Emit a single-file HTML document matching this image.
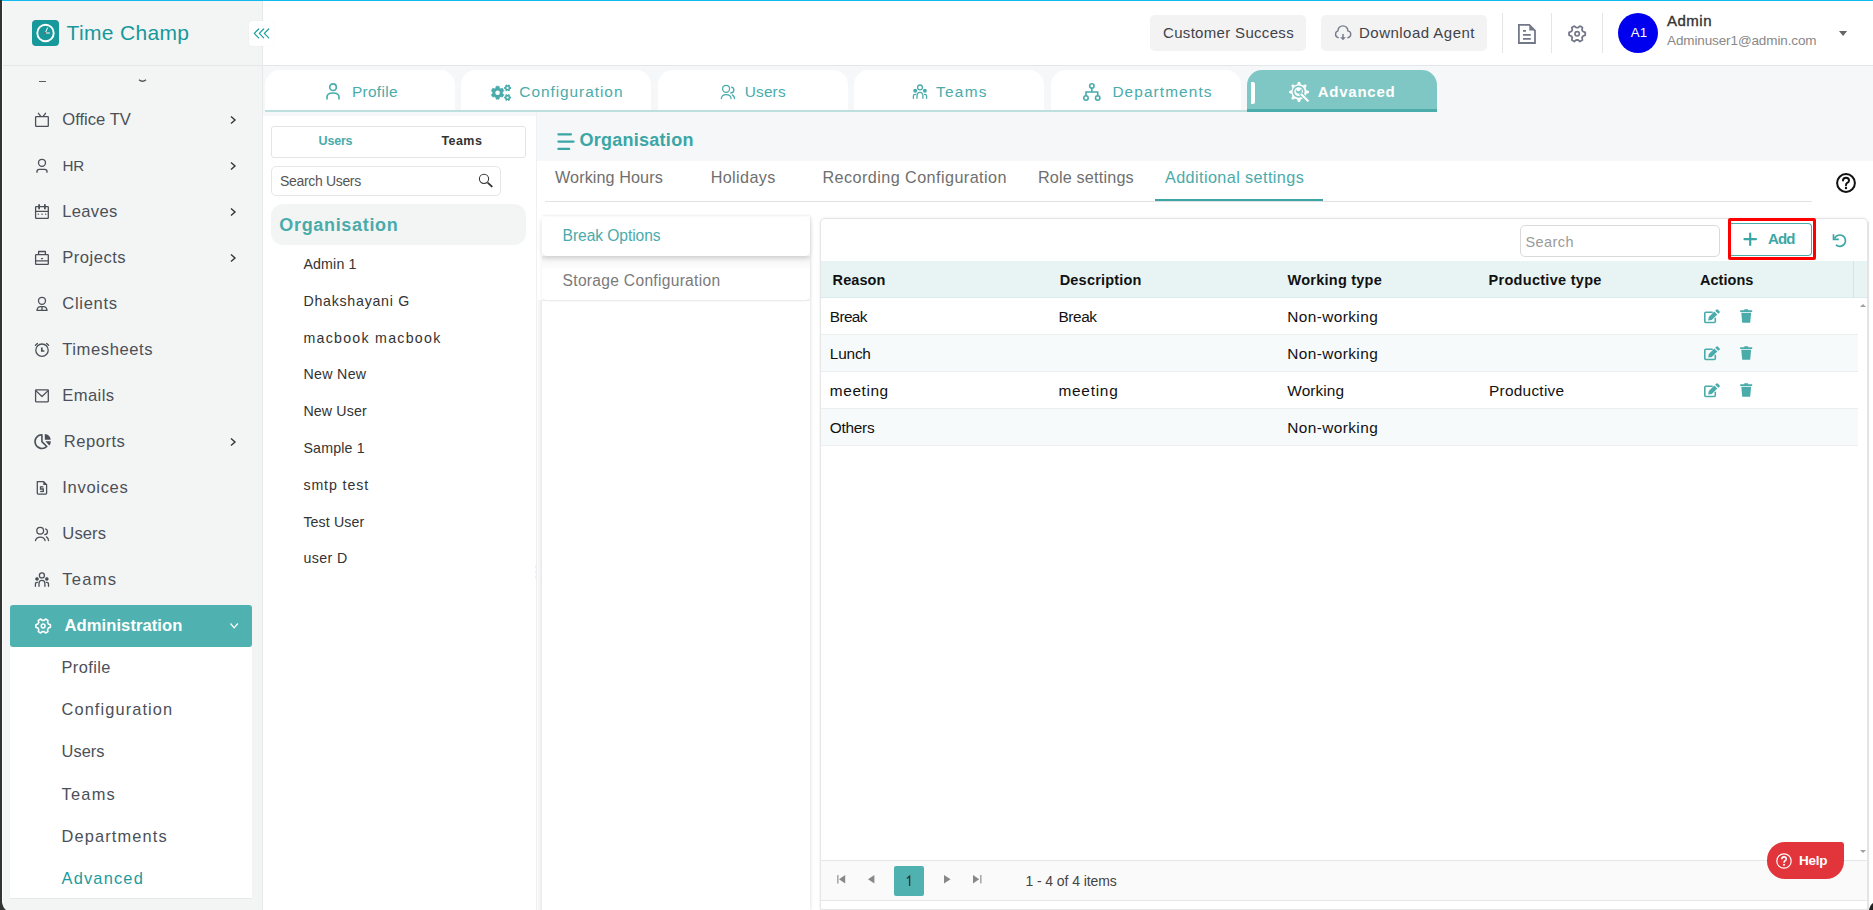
<!DOCTYPE html>
<html><head><meta charset="utf-8">
<style>
*{box-sizing:border-box}
html,body{margin:0;padding:0}
body{width:1873px;height:910px;overflow:hidden;position:relative;background:#f5f7f9;font-family:"Liberation Sans",sans-serif;color:#333}
.a{position:absolute}
.t{position:absolute;white-space:nowrap;line-height:1}
.b{display:inline-block;width:0;height:0;vertical-align:baseline}
svg{position:absolute;overflow:visible}
</style></head><body>
<div class="a" style="left:262px;top:0px;width:1611px;height:65px;background:#fff;"></div>
<div class="a" style="left:0px;top:0px;width:262px;height:65px;background:#f3f5f5;"></div>
<div class="a" style="left:0px;top:65px;width:1873px;height:1px;background:#e4e7e9;"></div>
<div class="a" style="left:0px;top:66px;width:262px;height:844px;background:#f3f5f5;"></div>
<div class="a" style="left:262px;top:0px;width:1px;height:910px;background:#e6e9ea;"></div>
<div class="a" style="left:32px;top:20px;width:27px;height:26px;background:#17989a;border-radius:4px"></div>
<svg style="left:32px;top:20px;" width="27" height="26" viewBox="0 0 27 26"><circle cx="13.5" cy="13" r="8.2" fill="none" stroke="#fff" stroke-width="1.9"/><path d="M13.3 13 L15.6 7.6 M13.3 13 L17.8 13" stroke="#fff" stroke-width="1" fill="none"/><circle cx="13.3" cy="13" r="0.9" fill="#e33"/></svg>
<div class="t" id="t0" style="left:66.5px;top:22.41px;font-size:21px;color:#17989a;letter-spacing:0.333px;">Time Champ<i class="b"></i></div>
<div class="a" style="left:249px;top:21px;width:25px;height:25px;background:#fff;border-radius:4px;box-shadow:0 0 2px rgba(0,0,0,0.06)"></div>
<svg style="left:244px;top:16px;" width="36" height="34" viewBox="0 0 36 34"><path transform="translate(-244,-16)" d="M258.7 29 L254.3 33.4 L258.7 37.8 M263.7 29 L259.3 33.4 L263.7 37.8 M268.7 29 L264.3 33.4 L268.7 37.8" fill="none" stroke="#1c9c9c" stroke-width="1.2" stroke-linecap="round" stroke-linejoin="round"/></svg>
<div class="a" style="left:39px;top:81px;width:7px;height:1.3px;background:#555b62;"></div>
<svg style="left:138px;top:79.3px;" width="9" height="5" viewBox="0 0 9 5"><path d="M1 0.8 Q4.5 3.8 8 0.8" fill="none" stroke="#4b5058" stroke-width="1.4"/></svg>
<svg style="left:30px;top:107px;" width="26" height="24" viewBox="0 0 26 24"><g transform="translate(-30,-107)"><rect x="35.6" y="116.6" width="12.7" height="9.8" rx="0.6" fill="none" stroke="#4b5058" stroke-width="1.3" stroke-linecap="round" stroke-linejoin="round"/><path d="M38.4 113.3 L40.9 116.3 M45.5 113.3 L43.2 116.3" fill="none" stroke="#4b5058" stroke-width="1.3" stroke-linecap="round" stroke-linejoin="round"/></g></svg>
<div class="t" id="t1" style="left:62.3px;top:112.10px;font-size:16.6px;color:#4b5058;">Office TV<i class="b"></i></div>
<svg style="left:230.3px;top:116.1px;" width="6" height="8" viewBox="0 0 6 8"><path d="M1 0.5 L5 4 L1 7.5" fill="none" stroke="#333" stroke-width="1.4"/></svg>
<svg style="left:30px;top:153px;" width="26" height="24" viewBox="0 0 26 24"><g transform="translate(-30,-153)"><circle cx="42" cy="162.8" r="3.5" fill="none" stroke="#4b5058" stroke-width="1.3" stroke-linecap="round" stroke-linejoin="round"/><path d="M37 172.3 V171.6 Q37 169.4 39.2 169.4 H44.8 Q47 169.4 47 171.6 V172.3" fill="none" stroke="#4b5058" stroke-width="1.3" stroke-linecap="round" stroke-linejoin="round"/></g></svg>
<div class="t" id="t2" style="left:62.5px;top:158.10px;font-size:15.2px;color:#4b5058;letter-spacing:-0.3px;">HR<i class="b"></i></div>
<svg style="left:230.3px;top:162.1px;" width="6" height="8" viewBox="0 0 6 8"><path d="M1 0.5 L5 4 L1 7.5" fill="none" stroke="#333" stroke-width="1.4"/></svg>
<svg style="left:30px;top:199px;" width="26" height="24" viewBox="0 0 26 24"><g transform="translate(-30,-199)"><rect x="35.6" y="206.7" width="12.7" height="11.7" rx="0.6" fill="none" stroke="#4b5058" stroke-width="1.3" stroke-linecap="round" stroke-linejoin="round"/><path d="M35.6 211.3 H48.3" fill="none" stroke="#4b5058" stroke-width="1.3" stroke-linecap="round" stroke-linejoin="round"/><path d="M39.1 205 V208.6 M44.9 205 V208.6" fill="none" stroke="#4b5058" stroke-width="1.8" stroke-linecap="round"/><path d="M38.3 214.2 h0.2 M41.9 214.2 h0.3 M45.6 214.2 h0.2" fill="none" stroke="#4b5058" stroke-width="1.3" stroke-linecap="round"/></g></svg>
<div class="t" id="t3" style="left:62.3px;top:204.10px;font-size:16.6px;color:#4b5058;letter-spacing:0.280px;">Leaves<i class="b"></i></div>
<svg style="left:230.3px;top:208.1px;" width="6" height="8" viewBox="0 0 6 8"><path d="M1 0.5 L5 4 L1 7.5" fill="none" stroke="#333" stroke-width="1.4"/></svg>
<svg style="left:30px;top:245px;" width="26" height="24" viewBox="0 0 26 24"><g transform="translate(-30,-245)"><rect x="35.6" y="254.6" width="12.7" height="9.8" rx="0.6" fill="none" stroke="#4b5058" stroke-width="1.3" stroke-linecap="round" stroke-linejoin="round"/><path d="M38.6 254.4 V251.5 H45.4 V254.4 M35.6 260.8 H48.3" fill="none" stroke="#4b5058" stroke-width="1.3" stroke-linecap="round" stroke-linejoin="round"/><path d="M41.4 258.6 H42.6" fill="none" stroke="#4b5058" stroke-width="1.2" stroke-linecap="round"/></g></svg>
<div class="t" id="t4" style="left:62.3px;top:250.10px;font-size:16.6px;color:#4b5058;letter-spacing:0.486px;">Projects<i class="b"></i></div>
<svg style="left:230.3px;top:254.10000000000002px;" width="6" height="8" viewBox="0 0 6 8"><path d="M1 0.5 L5 4 L1 7.5" fill="none" stroke="#333" stroke-width="1.4"/></svg>
<svg style="left:30px;top:291px;" width="26" height="24" viewBox="0 0 26 24"><g transform="translate(-30,-291)"><circle cx="42" cy="300.8" r="3.5" fill="none" stroke="#4b5058" stroke-width="1.3" stroke-linecap="round" stroke-linejoin="round"/><path d="M36.9 310.3 Q37.6 306.6 40.5 306.6 H43.5 Q46.4 306.6 47.1 310.3 Z M42 306.6 V310.3" fill="none" stroke="#4b5058" stroke-width="1.3" stroke-linecap="round" stroke-linejoin="round"/></g></svg>
<div class="t" id="t5" style="left:62.3px;top:296.10px;font-size:16.6px;color:#4b5058;letter-spacing:0.667px;">Clients<i class="b"></i></div>
<svg style="left:30px;top:337px;" width="26" height="24" viewBox="0 0 26 24"><g transform="translate(-30,-337)"><circle cx="42" cy="350.2" r="6.2" fill="none" stroke="#4b5058" stroke-width="1.3" stroke-linecap="round" stroke-linejoin="round"/><path d="M35.4 345.2 L37.4 343.4 M46.6 343.4 L48.6 345.2" fill="none" stroke="#4b5058" stroke-width="1.3" stroke-linecap="round" stroke-linejoin="round"/><path d="M41.8 347.5 V351 H44.4" fill="none" stroke="#4b5058" stroke-width="1.7"/></g></svg>
<div class="t" id="t6" style="left:62.3px;top:342.10px;font-size:16.6px;color:#4b5058;letter-spacing:0.556px;">Timesheets<i class="b"></i></div>
<svg style="left:30px;top:383px;" width="26" height="24" viewBox="0 0 26 24"><g transform="translate(-30,-383)"><rect x="35.6" y="389.9" width="12.7" height="11.9" rx="0.5" fill="none" stroke="#4b5058" stroke-width="1.3" stroke-linecap="round" stroke-linejoin="round"/><path d="M35.8 390.6 L42 396.5 L48.1 390.6" fill="none" stroke="#4b5058" stroke-width="1.3" stroke-linecap="round" stroke-linejoin="round"/></g></svg>
<div class="t" id="t7" style="left:62.3px;top:388.10px;font-size:16.6px;color:#4b5058;letter-spacing:0.400px;">Emails<i class="b"></i></div>
<svg style="left:30px;top:430.0px;" width="26" height="24" viewBox="0 0 26 24"><path d="M41.9 441.6 V434.7 A6.9 6.9 0 1 0 46.8 446.5 Z" fill="none" stroke="#4b5058" stroke-width="1.6" stroke-linejoin="round" transform="translate(-30,-430)"/><path d="M44.8 439.8 V433.9 A5.9 5.9 0 0 1 50.7 439.8 Z M45.4 441.3 H50.8 A6.2 6.2 0 0 1 49.3 445.6 Z" fill="#4b5058" transform="translate(-30,-430)"/></svg>
<div class="t" id="t8" style="left:63.8px;top:434.10px;font-size:16.6px;color:#4b5058;letter-spacing:0.500px;">Reports<i class="b"></i></div>
<svg style="left:230.3px;top:438.1px;" width="6" height="8" viewBox="0 0 6 8"><path d="M1 0.5 L5 4 L1 7.5" fill="none" stroke="#333" stroke-width="1.4"/></svg>
<svg style="left:30px;top:475px;" width="26" height="24" viewBox="0 0 26 24"><g transform="translate(-30,-475)"><path d="M37.3 481.6 H43.6 L46.6 484.8 V493.3 A0.8 0.8 0 0 1 45.8 494.1 H38.1 A0.8 0.8 0 0 1 37.3 493.3 Z" fill="none" stroke="#4b5058" stroke-width="1.3" stroke-linecap="round" stroke-linejoin="round"/><path d="M43.3 481 L47.2 484.9 H43.3 Z" fill="#4b5058"/><path d="M43.4 486.9 H40.5 V489 H43.3 V491.4 H40.2" fill="none" stroke="#4b5058" stroke-width="1.3"/><path d="M41.9 486 V486.9 M41.9 491.4 V492.4" fill="none" stroke="#4b5058" stroke-width="0.9"/></g></svg>
<div class="t" id="t9" style="left:62.3px;top:480.10px;font-size:16.6px;color:#4b5058;letter-spacing:0.657px;">Invoices<i class="b"></i></div>
<svg style="left:30px;top:521px;" width="26" height="24" viewBox="0 0 26 24"><g transform="translate(-30,-521)"><circle cx="40.2" cy="530.8" r="3.4" fill="none" stroke="#4b5058" stroke-width="1.3" stroke-linecap="round" stroke-linejoin="round"/><path d="M45.6 529 A2.9 2.9 0 0 1 44.8 534.6" fill="none" stroke="#4b5058" stroke-width="1.3" stroke-linecap="round" stroke-linejoin="round"/><path d="M35.5 540.5 A4.9 4.3 0 0 1 45.1 540.5 M46.5 536.9 Q48.3 538.2 48.5 540.5" fill="none" stroke="#4b5058" stroke-width="1.3" stroke-linecap="round" stroke-linejoin="round"/></g></svg>
<div class="t" id="t10" style="left:62.3px;top:526.10px;font-size:16.6px;color:#4b5058;letter-spacing:0.100px;">Users<i class="b"></i></div>
<svg style="left:30px;top:567px;" width="26" height="24" viewBox="0 0 26 24"><g transform="translate(-30,-567)"><circle cx="41.9" cy="575.4" r="2.5" fill="none" stroke="#4b5058" stroke-width="1.3" stroke-linecap="round" stroke-linejoin="round"/><circle cx="37" cy="578.9" r="1.5" fill="#4b5058" stroke="#4b5058" stroke-width="0.6"/><circle cx="46.8" cy="578.9" r="1.5" fill="#4b5058" stroke="#4b5058" stroke-width="0.6"/><path d="M39 586.3 V583.4 A2.95 2.95 0 0 1 44.9 583.4 V586.3 M35.4 586.3 V584 Q35.4 582.3 37.4 582.3 M48.5 586.3 V584 Q48.5 582.3 46.5 582.3" fill="none" stroke="#4b5058" stroke-width="1.3" stroke-linecap="round" stroke-linejoin="round"/></g></svg>
<div class="t" id="t11" style="left:62.3px;top:572.10px;font-size:16.6px;color:#4b5058;letter-spacing:1.200px;">Teams<i class="b"></i></div>
<div class="a" style="left:10px;top:605px;width:242px;height:42px;background:#4fb2b0;border-radius:3px"></div>
<svg style="left:34.7px;top:618px;" width="16.3" height="16" viewBox="0 0 16.3 16"><path d="M13.36 5.94 L15.43 6.69 L15.43 9.31 L13.36 10.06 A5.6 5.6 0 0 1 12.54 11.48 L12.93 13.65 L10.66 14.96 L8.97 13.54 A5.6 5.6 0 0 1 7.33 13.54 L5.64 14.96 L3.37 13.65 L3.76 11.48 A5.6 5.6 0 0 1 2.94 10.06 L0.87 9.31 L0.87 6.69 L2.94 5.94 A5.6 5.6 0 0 1 3.76 4.52 L3.37 2.35 L5.64 1.04 L7.33 2.46 A5.6 5.6 0 0 1 8.97 2.46 L10.66 1.04 L12.93 2.35 L12.54 4.52 A5.6 5.6 0 0 1 13.36 5.94 Z" fill="none" stroke="#fff" stroke-width="1.6" stroke-linejoin="round"/><circle cx="8.15" cy="8" r="1.9" fill="none" stroke="#fff" stroke-width="1.5"/></svg>
<div class="t" id="t12" style="left:64.6px;top:618.41px;font-size:16.6px;color:#fff;font-weight:700;letter-spacing:0.046px;">Administration<i class="b"></i></div>
<svg style="left:230px;top:623px;" width="8.3" height="5.5" viewBox="0 0 8.3 5.5"><path d="M0.5 0.5 L4.15 4.8 L7.8 0.5" fill="none" stroke="#fff" stroke-width="1.2"/></svg>
<div class="a" style="left:10px;top:647px;width:242px;height:251px;background:#fff;"></div>
<div class="a" style="left:10px;top:898px;width:242px;height:1px;background:#e6e9ea;"></div>
<div class="t" id="t13" style="left:61.5px;top:659.31px;font-size:16.4px;color:#4b5058;letter-spacing:0.400px;">Profile<i class="b"></i></div>
<div class="t" id="t14" style="left:61.5px;top:701.37px;font-size:16.4px;color:#4b5058;letter-spacing:1.100px;">Configuration<i class="b"></i></div>
<div class="t" id="t15" style="left:61.5px;top:743.43px;font-size:16.4px;color:#4b5058;letter-spacing:0.050px;">Users<i class="b"></i></div>
<div class="t" id="t16" style="left:61.5px;top:785.50px;font-size:16.4px;color:#4b5058;letter-spacing:1.250px;">Teams<i class="b"></i></div>
<div class="t" id="t17" style="left:61.5px;top:827.55px;font-size:16.4px;color:#4b5058;letter-spacing:1.140px;">Departments<i class="b"></i></div>
<div class="t" id="t18" style="left:61.5px;top:869.60px;font-size:16.4px;color:#1b9b9c;letter-spacing:1.200px;">Advanced<i class="b"></i></div>
<div class="a" style="left:0px;top:0px;width:1873px;height:1px;background:#10b9ee;z-index:50"></div>
<div class="a" style="left:0px;top:0px;width:2px;height:910px;background:#333;z-index:50"></div>
<div class="a" style="left:2px;top:1px;width:1px;height:909px;background:#fff;z-index:50"></div>
<svg style="left:0px;top:902px;z-index:51" width="6" height="8" viewBox="0 0 6 8"><path d="M0 0 H2 Q2.5 5 6 8 H0 Z" fill="#333"/></svg>
<svg style="left:1867px;top:903px;z-index:51" width="6" height="7" viewBox="0 0 6 7"><path d="M6 0 V7 H2 Q3 2 6 0 Z" fill="#222"/></svg>
<div class="a" style="left:1150px;top:15px;width:156px;height:36px;background:#f3f3f4;border-radius:5px"></div>
<div class="t" id="t19" style="left:1163px;top:24.91px;font-size:15px;color:#3f4349;letter-spacing:0.320px;">Customer Success<i class="b"></i></div>
<div class="a" style="left:1321px;top:15px;width:166px;height:36px;background:#f3f3f4;border-radius:5px"></div>
<svg style="left:1320px;top:15px;" width="40" height="35" viewBox="0 0 40 35"><g transform="translate(-1320,-15)"><path d="M1338.2 37.6 A3.5 3.5 0 0 1 1337.9 30.9 A5 5 0 0 1 1347.9 30.9 A3.45 3.45 0 0 1 1347.9 37.7" fill="none" stroke="#777c8e" stroke-width="1.4" stroke-linecap="round"/><path d="M1343 34 V38.3" stroke="#777c8e" stroke-width="1.5"/><path d="M1340.1 37.2 L1343 40.3 L1345.9 37.2 Z" fill="#777c8e"/></g></svg>
<div class="t" id="t20" style="left:1359px;top:24.91px;font-size:15px;color:#3f4349;letter-spacing:0.477px;">Download Agent<i class="b"></i></div>
<div class="a" style="left:1502px;top:13px;width:1px;height:40px;background:#e3e5e8;"></div>
<div class="a" style="left:1551px;top:13px;width:1px;height:40px;background:#e3e5e8;"></div>
<div class="a" style="left:1602px;top:13px;width:1px;height:40px;background:#e3e5e8;"></div>
<svg style="left:1518px;top:24px;" width="18" height="20" viewBox="0 0 18 20"><path d="M0.9 0.9 H11.3 L17 6.6 V19 H0.9 Z" fill="none" stroke="#737889" stroke-width="1.8"/><path d="M11.3 0.9 L17 6.6 H11.3 Z" fill="#737889"/><path d="M5 6.8 H8 M5 10.8 H12.8 M5 14.8 H12.8" stroke="#737889" stroke-width="1.7"/></svg>
<svg style="left:1567.7px;top:25px;" width="18.3" height="17.6" viewBox="0 0 18.3 17.6"><path d="M14.91 6.52 L17.22 7.35 L17.22 10.25 L14.91 11.08 A6.2 6.2 0 0 1 14.01 12.65 L14.44 15.06 L11.93 16.52 L10.06 14.93 A6.2 6.2 0 0 1 8.24 14.93 L6.37 16.52 L3.86 15.06 L4.29 12.65 A6.2 6.2 0 0 1 3.39 11.08 L1.08 10.25 L1.08 7.35 L3.39 6.52 A6.2 6.2 0 0 1 4.29 4.95 L3.86 2.54 L6.37 1.08 L8.24 2.67 A6.2 6.2 0 0 1 10.06 2.67 L11.93 1.08 L14.44 2.54 L14.01 4.95 A6.2 6.2 0 0 1 14.91 6.52 Z" fill="none" stroke="#737889" stroke-width="1.8" stroke-linejoin="round"/><circle cx="9.15" cy="8.8" r="2.2" fill="none" stroke="#737889" stroke-width="1.7"/></svg>
<div class="a" style="left:1618px;top:13px;width:40px;height:40px;background:#0000ee;border-radius:50%"></div>
<div class="t" id="t21" style="left:1630.8px;top:26.32px;font-size:13.3px;color:#fff;">A1<i class="b"></i></div>
<div class="t" id="t22" style="left:1667px;top:13.00px;font-size:15px;color:#333;letter-spacing:0.500px;-webkit-text-stroke:0.35px #333;">Admin<i class="b"></i></div>
<div class="t" id="t23" style="left:1667px;top:34.41px;font-size:13.5px;color:#888;letter-spacing:-0.116px;">Adminuser1@admin.com<i class="b"></i></div>
<svg style="left:1838.7px;top:30.7px;" width="8.1" height="5" viewBox="0 0 8.1 5"><path d="M0 0 H8.1 L4.05 5 Z" fill="#666"/></svg>
<div class="a" style="left:265px;top:109.5px;width:1172px;height:2.5px;background:#bde0df;"></div>
<div class="a" style="left:265px;top:70px;width:190px;height:39.5px;background:#fff;border-radius:15px 15px 0 0"></div>
<div class="t" id="t24" style="left:351.9px;top:84.21px;font-size:15.4px;color:#4aabab;letter-spacing:0.333px;">Profile<i class="b"></i></div>
<div class="a" style="left:461px;top:70px;width:190px;height:39.5px;background:#fff;border-radius:15px 15px 0 0"></div>
<div class="t" id="t25" style="left:519.3px;top:84.21px;font-size:15.4px;color:#4aabab;letter-spacing:0.967px;">Configuration<i class="b"></i></div>
<div class="a" style="left:658px;top:70px;width:190px;height:39.5px;background:#fff;border-radius:15px 15px 0 0"></div>
<div class="t" id="t26" style="left:744.8px;top:84.21px;font-size:15.4px;color:#4aabab;letter-spacing:0.150px;">Users<i class="b"></i></div>
<div class="a" style="left:854px;top:70px;width:190px;height:39.5px;background:#fff;border-radius:15px 15px 0 0"></div>
<div class="t" id="t27" style="left:936.1px;top:84.21px;font-size:15.4px;color:#4aabab;letter-spacing:1.250px;">Teams<i class="b"></i></div>
<div class="a" style="left:1051px;top:70px;width:190px;height:39.5px;background:#fff;border-radius:15px 15px 0 0"></div>
<div class="t" id="t28" style="left:1112.4px;top:84.21px;font-size:15.4px;color:#4aabab;letter-spacing:1.100px;">Departments<i class="b"></i></div>
<div class="a" style="left:1247px;top:70px;width:190px;height:42px;background:#7fc7c4;border-radius:15px 15px 0 0"></div>
<div class="a" style="left:1247px;top:109px;width:190px;height:3px;background:#4aadab;"></div>
<div class="a" style="left:1250.7px;top:82px;width:4.3px;height:22px;background:#fff;border-radius:0 2px 2px 0"></div>
<div class="t" id="t29" style="left:1317.8px;top:84.21px;font-size:15px;color:#fff;font-weight:700;letter-spacing:0.743px;">Advanced<i class="b"></i></div>
<svg style="left:326px;top:83px;" width="14" height="17" viewBox="0 0 14 17"><circle cx="7" cy="4.2" r="3.3" fill="none" stroke="#4aabab" stroke-width="1.6" stroke-linecap="round"/><path d="M1 16 V14 Q1 10 7 10 Q13 10 13 14 V16" fill="none" stroke="#4aabab" stroke-width="1.6" stroke-linecap="round"/></svg>
<svg style="left:487px;top:80px;" width="28" height="24" viewBox="0 0 28 24"><path d="M8.61 8.22 L9.23 6.24 L11.97 6.24 L12.59 8.22 A4.9 4.9 0 0 1 13.48 8.74 L15.50 8.28 L16.88 10.66 L15.47 12.19 A4.9 4.9 0 0 1 15.47 13.21 L16.88 14.74 L15.50 17.12 L13.48 16.66 A4.9 4.9 0 0 1 12.59 17.18 L11.97 19.16 L9.23 19.16 L8.61 17.18 A4.9 4.9 0 0 1 7.72 16.66 L5.70 17.12 L4.32 14.74 L5.73 13.21 A4.9 4.9 0 0 1 5.73 12.19 L4.32 10.66 L5.70 8.28 L7.72 8.74 A4.9 4.9 0 0 1 8.61 8.22 Z" fill="#4aabab" stroke="#4aabab" stroke-width="0.6" stroke-linejoin="round"/><circle cx="10.6" cy="12.7" r="2.3" fill="#fff"/><path d="M22.98 6.84 L24.10 7.08 L24.10 8.72 L22.98 8.96 A2.6 2.6 0 0 1 22.70 9.43 L23.06 10.52 L21.64 11.35 L20.87 10.49 A2.6 2.6 0 0 1 20.33 10.49 L19.56 11.35 L18.14 10.52 L18.50 9.43 A2.6 2.6 0 0 1 18.22 8.96 L17.10 8.72 L17.10 7.08 L18.22 6.84 A2.6 2.6 0 0 1 18.50 6.37 L18.14 5.28 L19.56 4.45 L20.33 5.31 A2.6 2.6 0 0 1 20.87 5.31 L21.64 4.45 L23.06 5.28 L22.70 6.37 A2.6 2.6 0 0 1 22.98 6.84 Z" fill="#4aabab"/><circle cx="20.6" cy="7.9" r="1.1" fill="#fff"/><path d="M22.98 16.44 L24.10 16.68 L24.10 18.32 L22.98 18.56 A2.6 2.6 0 0 1 22.70 19.03 L23.06 20.12 L21.64 20.95 L20.87 20.09 A2.6 2.6 0 0 1 20.33 20.09 L19.56 20.95 L18.14 20.12 L18.50 19.03 A2.6 2.6 0 0 1 18.22 18.56 L17.10 18.32 L17.10 16.68 L18.22 16.44 A2.6 2.6 0 0 1 18.50 15.97 L18.14 14.88 L19.56 14.05 L20.33 14.91 A2.6 2.6 0 0 1 20.87 14.91 L21.64 14.05 L23.06 14.88 L22.70 15.97 A2.6 2.6 0 0 1 22.98 16.44 Z" fill="#4aabab"/><circle cx="20.6" cy="17.5" r="1.1" fill="#fff"/></svg>
<svg style="left:715px;top:80px;" width="25" height="24" viewBox="0 0 25 24"><g transform="translate(-715,-80)" fill="none" stroke="#4aabab" stroke-width="1.3" stroke-linecap="round"><circle cx="726.1" cy="88.8" r="3.5"/><path d="M731.6 87.1 A3 3 0 0 1 730.8 93"/><path d="M721.3 98.5 A4.95 4.5 0 0 1 731.1 98.5 M732.4 94.9 Q734.4 96.3 734.6 98.5"/></g></svg>
<svg style="left:905px;top:80px;" width="30" height="24" viewBox="0 0 30 24"><g transform="translate(-905,-80)" fill="none" stroke="#4aabab" stroke-width="1.3" stroke-linecap="round"><circle cx="920" cy="87.4" r="2.4"/><circle cx="915.2" cy="90.8" r="1.3" fill="#4aabab"/><circle cx="924.9" cy="90.8" r="1.3" fill="#4aabab"/><path d="M917 98.3 V95.3 A2.95 2.95 0 0 1 922.9 95.3 V98.3 M913.4 98.3 V95.9 Q913.4 94.4 915.4 94.4 M926.6 98.3 V95.9 Q926.6 94.4 924.6 94.4"/></g></svg>
<svg style="left:1082.7px;top:83.3px;" width="17.7" height="18.1" viewBox="0 0 17.7 18.1"><circle cx="8.85" cy="3" r="2.2" fill="none" stroke="#4aabab" stroke-width="1.6" stroke-linecap="round"/><circle cx="3" cy="15" r="2.2" fill="none" stroke="#4aabab" stroke-width="1.6" stroke-linecap="round"/><circle cx="14.7" cy="15" r="2.2" fill="none" stroke="#4aabab" stroke-width="1.6" stroke-linecap="round"/><path d="M8.85 5.2 V9 M3 12.8 V9 H14.7 V12.8" fill="none" stroke="#4aabab" stroke-width="1.6" stroke-linecap="round"/></svg>
<svg style="left:1284px;top:78px;" width="30" height="28" viewBox="0 0 30 28"><path d="M13.23 6.61 L13.90 4.06 L16.10 4.06 L16.77 6.61 A7.6 7.6 0 0 1 18.97 7.52 L21.25 6.20 L22.80 7.75 L21.48 10.03 A7.6 7.6 0 0 1 22.39 12.23 L24.94 12.90 L24.94 15.10 L22.39 15.77 A7.6 7.6 0 0 1 21.48 17.97 L22.80 20.25 L21.25 21.80 L18.97 20.48 A7.6 7.6 0 0 1 16.77 21.39 L16.10 23.94 L13.90 23.94 L13.23 21.39 A7.6 7.6 0 0 1 11.03 20.48 L8.75 21.80 L7.20 20.25 L8.52 17.97 A7.6 7.6 0 0 1 7.61 15.77 L5.06 15.10 L5.06 12.90 L7.61 12.23 A7.6 7.6 0 0 1 8.52 10.03 L7.20 7.75 L8.75 6.20 L11.03 7.52 A7.6 7.6 0 0 1 13.23 6.61 Z" fill="#fff"/><circle cx="14.6" cy="13.6" r="5.2" fill="#fff" stroke="#7fc7c4" stroke-width="1.7"/><path d="M17.5 16.5 L23.8 22.8" stroke="#7fc7c4" stroke-width="4.2" stroke-linecap="round"/><path d="M17.5 16.5 L23.8 22.8" stroke="#fff" stroke-width="2.2" stroke-linecap="round"/><path d="M12.2 11.2 A3 3 0 1 0 16.8 10.4 A2.2 2.2 0 1 1 12.2 11.2 Z" fill="#7fc7c4"/></svg>
<div class="a" style="left:263px;top:116px;width:273px;height:794px;background:#fff;"></div>
<div class="a" style="left:535.8px;top:112px;width:1.5px;height:798px;background:#edf1f3;"></div>
<div class="a" style="left:271px;top:126px;width:255px;height:32px;background:#fff;border:1px solid #e4e4e4;border-radius:3px"></div>
<div class="t" id="t30" style="left:318.6px;top:135.31px;font-size:12.5px;color:#4aabab;font-weight:700;letter-spacing:-0.200px;">Users<i class="b"></i></div>
<div class="t" id="t31" style="left:441.4px;top:135.31px;font-size:12.5px;color:#333;font-weight:700;letter-spacing:0.450px;">Teams<i class="b"></i></div>
<div class="a" style="left:271px;top:166px;width:230px;height:30px;background:#fff;border:1px solid #e6e6e6;border-radius:5px"></div>
<div class="t" id="t32" style="left:280px;top:173.82px;font-size:14px;color:#555;letter-spacing:-0.327px;">Search Users<i class="b"></i></div>
<svg style="left:470px;top:165px;" width="35" height="35" viewBox="0 0 35 35"><g transform="translate(-470,-165)"><circle cx="484" cy="178.8" r="4.6" fill="none" stroke="#333" stroke-width="1.05"/><path d="M487.6 182.6 L492.3 186.9" stroke="#333" stroke-width="1.9" stroke-linecap="butt"/></g></svg>
<div class="a" style="left:271px;top:204px;width:255px;height:41px;background:#f3f5f5;border-radius:12px"></div>
<div class="t" id="t33" style="left:279.3px;top:215.51px;font-size:18px;color:#4aabab;font-weight:700;letter-spacing:0.673px;">Organisation<i class="b"></i></div>
<div class="t" id="t34" style="left:303.4px;top:256.90px;font-size:14.2px;color:#333;letter-spacing:0.167px;">Admin 1<i class="b"></i></div>
<div class="t" id="t35" style="left:303.4px;top:293.70px;font-size:14.2px;color:#333;letter-spacing:0.750px;">Dhakshayani G<i class="b"></i></div>
<div class="t" id="t36" style="left:303.4px;top:330.51px;font-size:14.2px;color:#333;letter-spacing:1.271px;">macbook macbook<i class="b"></i></div>
<div class="t" id="t37" style="left:303.4px;top:367.32px;font-size:14.2px;color:#333;letter-spacing:0.333px;">New New<i class="b"></i></div>
<div class="t" id="t38" style="left:303.4px;top:404.11px;font-size:14.2px;color:#333;letter-spacing:0.143px;">New User<i class="b"></i></div>
<div class="t" id="t39" style="left:303.4px;top:440.90px;font-size:14.2px;color:#333;letter-spacing:0.200px;">Sample 1<i class="b"></i></div>
<div class="t" id="t40" style="left:303.4px;top:477.70px;font-size:14.2px;color:#333;letter-spacing:0.900px;">smtp test<i class="b"></i></div>
<div class="t" id="t41" style="left:303.4px;top:514.51px;font-size:14.2px;color:#333;letter-spacing:0.125px;">Test User<i class="b"></i></div>
<div class="t" id="t42" style="left:303.4px;top:551.32px;font-size:14.2px;color:#333;letter-spacing:0.400px;">user D<i class="b"></i></div>
<div class="a" style="left:534.5px;top:565px;width:4.2px;height:4.2px;background:#e9eef2;border-radius:50%"></div>
<div class="a" style="left:534.5px;top:570px;width:4.2px;height:4.2px;background:#e9eef2;border-radius:50%"></div>
<div class="a" style="left:534.5px;top:575px;width:4.2px;height:4.2px;background:#e9eef2;border-radius:50%"></div>
<div class="a" style="left:537px;top:112px;width:1336px;height:49px;background:#f6f7f9;"></div>
<div class="a" style="left:537px;top:161px;width:1336px;height:749px;background:#fff;"></div>
<svg style="left:556.5px;top:132.5px;" width="18" height="18" viewBox="0 0 18 18"><path d="M1.4 1.3 H14 M1.4 8.6 H16.6 M1.4 15.9 H12.2" stroke="#3aa6a5" stroke-width="2.2" stroke-linecap="round"/></svg>
<div class="t" id="t43" style="left:579.4px;top:131.41px;font-size:18px;color:#3aa6a5;font-weight:700;letter-spacing:0.273px;">Organisation<i class="b"></i></div>
<div class="t" id="t44" style="left:555px;top:169.31px;font-size:16.2px;color:#6f6f6f;letter-spacing:0.083px;">Working Hours<i class="b"></i></div>
<div class="t" id="t45" style="left:710.7px;top:169.31px;font-size:16.2px;color:#6f6f6f;letter-spacing:0.371px;">Holidays<i class="b"></i></div>
<div class="t" id="t46" style="left:822.5px;top:169.31px;font-size:16.2px;color:#6f6f6f;letter-spacing:0.427px;">Recording Configuration<i class="b"></i></div>
<div class="t" id="t47" style="left:1037.9px;top:169.31px;font-size:16.2px;color:#6f6f6f;letter-spacing:0.183px;">Role settings<i class="b"></i></div>
<div class="t" id="t48" style="left:1165px;top:169.31px;font-size:16.2px;color:#4aabab;letter-spacing:0.411px;">Additional settings<i class="b"></i></div>
<div class="a" style="left:545px;top:201px;width:1267px;height:1px;background:#e2e2e2;"></div>
<div class="a" style="left:1155px;top:199px;width:168px;height:2.4px;background:#3aa6a5;"></div>
<svg style="left:1836px;top:173px;" width="20" height="20" viewBox="0 0 20 20"><circle cx="10" cy="10" r="8.9" fill="none" stroke="#111" stroke-width="2"/><path d="M7 7.6 Q7 4.8 10 4.8 Q13 4.8 13 7.4 Q13 9 11.2 9.9 Q10 10.5 10 12.2" fill="none" stroke="#111" stroke-width="2" stroke-linecap="round"/><circle cx="10" cy="15" r="1.2" fill="#111"/></svg>
<div class="a" style="left:541.2px;top:216px;width:269px;height:694px;background:#fff;box-shadow:1px 0 3px rgba(0,0,0,0.10)"></div>
<div class="a" style="left:542px;top:255.5px;width:268px;height:44px;background:linear-gradient(180deg,#eaeaea,#f8f8f8 14%,#fff 32%);border-radius:0 0 5px 5px;box-shadow:0 1px 2px rgba(0,0,0,0.10)"></div>
<div class="a" style="left:542px;top:216.6px;width:268px;height:39px;background:#fff;border-radius:5px;box-shadow:0 2px 5px rgba(0,0,0,0.12)"></div>
<div class="a" style="left:537.3px;top:300px;width:4.9px;height:610px;background:linear-gradient(90deg,#fcfcfc,#f3f3f3 60%,#e8e8e8);"></div>
<div class="t" id="t49" style="left:562.6px;top:228.21px;font-size:15.6px;color:#4aabab;letter-spacing:-0.067px;">Break Options<i class="b"></i></div>
<div class="t" id="t50" style="left:562.6px;top:272.61px;font-size:15.6px;color:#7a7a7a;letter-spacing:0.290px;">Storage Configuration<i class="b"></i></div>
<div class="a" style="left:542px;top:299.5px;width:268px;height:1px;background:#ececec;"></div>
<div class="a" style="left:820px;top:217.5px;width:1048px;height:692.5px;background:#fff;border:1px solid #e6e6e6;border-radius:5px 5px 0 0;box-shadow:0 0 3px rgba(0,0,0,0.08)"></div>
<div class="a" style="left:1520px;top:225.3px;width:200px;height:31.5px;background:#fff;border:1px solid #d9d9d9;border-radius:5px"></div>
<div class="t" id="t51" style="left:1525.5px;top:235.00px;font-size:14.5px;color:#9a9a9a;letter-spacing:0.400px;">Search<i class="b"></i></div>
<div class="a" style="left:1729px;top:223px;width:83px;height:33px;background:#fff;border:1.3px solid #4aabab;border-left:none;border-radius:0 4px 4px 0"></div>
<svg style="left:1744px;top:233px;" width="12.4" height="12.4" viewBox="0 0 12.4 12.4"><path d="M6.2 0.5 V11.9 M0.5 6.2 H11.9" stroke="#3aa6a5" stroke-width="2.2" stroke-linecap="round"/></svg>
<div class="t" id="t52" style="left:1768px;top:231.00px;font-size:15px;color:#3aa6a5;font-weight:700;letter-spacing:-0.900px;">Add<i class="b"></i></div>
<div class="a" style="left:1728px;top:218.3px;width:88px;height:41.5px;background:transparent;border:3px solid #ff0000;border-radius:2px"></div>
<svg style="left:1825px;top:225px;" width="35" height="30" viewBox="0 0 35 30"><g transform="translate(-1825,-225)" fill="none" stroke="#3aa6a5" stroke-width="1.7" stroke-linecap="butt" stroke-linejoin="miter"><path d="M1833.5 234.3 V239.3 H1838.8"/><path d="M1834.6 238.3 A5.7 5.7 0 1 1 1835.9 244.9"/></g></svg>
<div class="a" style="left:821px;top:260.8px;width:1046px;height:37px;background:#e8f4f4;border-bottom:1px solid #dcebeb"></div>
<div class="a" style="left:1853px;top:261px;width:1px;height:37px;background:#d7e3e3;"></div>
<div class="t" id="t53" style="left:832.6px;top:273.40px;font-size:14.5px;color:#111;font-weight:700;letter-spacing:0.080px;">Reason<i class="b"></i></div>
<div class="t" id="t54" style="left:1059.7px;top:273.40px;font-size:14.5px;color:#111;font-weight:700;letter-spacing:0.200px;">Description<i class="b"></i></div>
<div class="t" id="t55" style="left:1287.6px;top:273.40px;font-size:14.5px;color:#111;font-weight:700;letter-spacing:0.236px;">Working type<i class="b"></i></div>
<div class="t" id="t56" style="left:1488.6px;top:273.40px;font-size:14.5px;color:#111;font-weight:700;letter-spacing:0.286px;">Productive type<i class="b"></i></div>
<div class="t" id="t57" style="left:1700px;top:273.40px;font-size:14.5px;color:#111;font-weight:700;letter-spacing:0.033px;">Actions<i class="b"></i></div>
<div class="a" style="left:821px;top:334.0px;width:1037px;height:1px;background:#eceff0;"></div>
<div class="t" id="t58" style="left:829.8px;top:309.01px;font-size:15.4px;color:#111;letter-spacing:-0.650px;">Break<i class="b"></i></div>
<div class="t" id="t59" style="left:1058.4px;top:309.01px;font-size:15.4px;color:#111;letter-spacing:-0.400px;">Break<i class="b"></i></div>
<div class="t" id="t60" style="left:1287.3px;top:309.01px;font-size:15.4px;color:#111;letter-spacing:0.400px;">Non-working<i class="b"></i></div>
<svg style="left:1700px;top:297.5px;" width="24" height="30" viewBox="0 0 24 30"><g transform="translate(-1700,-297.5)"><path d="M1712.7 311.7 H1705.8 A1 1 0 0 0 1704.8 312.7 V321 A1 1 0 0 0 1705.8 322 H1714.3 A1 1 0 0 0 1715.3 321 V317.3" fill="none" stroke="#4aabab" stroke-width="1.6"/><path d="M1708.2 320.1 L1708.8 316.6 L1714.3 311.1 L1717.3 314.1 L1711.8 319.6 Z M1715.2 310.2 L1716.5 308.9 Q1717.1 308.4 1717.7 308.9 L1719.7 310.9 Q1720.1 311.5 1719.7 312 L1718.3 313.3 Z" fill="#4aabab"/></g></svg>
<svg style="left:1740px;top:309.0px;" width="12.4" height="14" viewBox="0 0 12.4 14"><path d="M4.3 1.2 V0.2 H8.1 V1.2 H12.2 V3 H0.2 V1.2 Z" fill="#4aabab"/><path d="M1.3 3.8 H11.1 L10.2 13.8 H2.2 Z" fill="#4aabab"/></svg>
<div class="a" style="left:821px;top:334.5px;width:1037px;height:37px;background:#f7fafb;"></div>
<div class="a" style="left:821px;top:371.0px;width:1037px;height:1px;background:#eceff0;"></div>
<div class="t" id="t61" style="left:829.8px;top:346.01px;font-size:15.4px;color:#111;letter-spacing:-0.200px;">Lunch<i class="b"></i></div>
<div class="t" id="t62" style="left:1287.3px;top:346.01px;font-size:15.4px;color:#111;letter-spacing:0.400px;">Non-working<i class="b"></i></div>
<svg style="left:1700px;top:334.5px;" width="24" height="30" viewBox="0 0 24 30"><g transform="translate(-1700,-297.5)"><path d="M1712.7 311.7 H1705.8 A1 1 0 0 0 1704.8 312.7 V321 A1 1 0 0 0 1705.8 322 H1714.3 A1 1 0 0 0 1715.3 321 V317.3" fill="none" stroke="#4aabab" stroke-width="1.6"/><path d="M1708.2 320.1 L1708.8 316.6 L1714.3 311.1 L1717.3 314.1 L1711.8 319.6 Z M1715.2 310.2 L1716.5 308.9 Q1717.1 308.4 1717.7 308.9 L1719.7 310.9 Q1720.1 311.5 1719.7 312 L1718.3 313.3 Z" fill="#4aabab"/></g></svg>
<svg style="left:1740px;top:346.0px;" width="12.4" height="14" viewBox="0 0 12.4 14"><path d="M4.3 1.2 V0.2 H8.1 V1.2 H12.2 V3 H0.2 V1.2 Z" fill="#4aabab"/><path d="M1.3 3.8 H11.1 L10.2 13.8 H2.2 Z" fill="#4aabab"/></svg>
<div class="a" style="left:821px;top:408.0px;width:1037px;height:1px;background:#eceff0;"></div>
<div class="t" id="t63" style="left:829.8px;top:383.01px;font-size:15.4px;color:#111;letter-spacing:0.600px;">meeting<i class="b"></i></div>
<div class="t" id="t64" style="left:1058.4px;top:383.01px;font-size:15.4px;color:#111;letter-spacing:0.767px;">meeting<i class="b"></i></div>
<div class="t" id="t65" style="left:1287.3px;top:383.01px;font-size:15.4px;color:#111;letter-spacing:0.100px;">Working<i class="b"></i></div>
<div class="t" id="t66" style="left:1489px;top:383.01px;font-size:15.4px;color:#111;letter-spacing:0.267px;">Productive<i class="b"></i></div>
<svg style="left:1700px;top:371.5px;" width="24" height="30" viewBox="0 0 24 30"><g transform="translate(-1700,-297.5)"><path d="M1712.7 311.7 H1705.8 A1 1 0 0 0 1704.8 312.7 V321 A1 1 0 0 0 1705.8 322 H1714.3 A1 1 0 0 0 1715.3 321 V317.3" fill="none" stroke="#4aabab" stroke-width="1.6"/><path d="M1708.2 320.1 L1708.8 316.6 L1714.3 311.1 L1717.3 314.1 L1711.8 319.6 Z M1715.2 310.2 L1716.5 308.9 Q1717.1 308.4 1717.7 308.9 L1719.7 310.9 Q1720.1 311.5 1719.7 312 L1718.3 313.3 Z" fill="#4aabab"/></g></svg>
<svg style="left:1740px;top:383.0px;" width="12.4" height="14" viewBox="0 0 12.4 14"><path d="M4.3 1.2 V0.2 H8.1 V1.2 H12.2 V3 H0.2 V1.2 Z" fill="#4aabab"/><path d="M1.3 3.8 H11.1 L10.2 13.8 H2.2 Z" fill="#4aabab"/></svg>
<div class="a" style="left:821px;top:408.5px;width:1037px;height:37px;background:#f7fafb;"></div>
<div class="a" style="left:821px;top:445.0px;width:1037px;height:1px;background:#eceff0;"></div>
<div class="t" id="t67" style="left:829.8px;top:420.01px;font-size:15.4px;color:#111;letter-spacing:-0.280px;">Others<i class="b"></i></div>
<div class="t" id="t68" style="left:1287.3px;top:420.01px;font-size:15.4px;color:#111;letter-spacing:0.400px;">Non-working<i class="b"></i></div>
<svg style="left:1860px;top:304px;" width="6" height="3" viewBox="0 0 6 3"><path d="M0 3 L3 0 L6 3 Z" fill="#a0a0a0"/></svg>
<svg style="left:1860px;top:849.7px;" width="6" height="3" viewBox="0 0 6 3"><path d="M0 0 L3 3 L6 0 Z" fill="#a0a0a0"/></svg>
<div class="a" style="left:1867px;top:222px;width:2px;height:688px;background:#e4e4e4;"></div>
<div class="a" style="left:821px;top:860.3px;width:1046px;height:40.7px;background:#fafafa;border-top:1px solid #e6e6e6;border-bottom:1px solid #e6e6e6"></div>
<svg style="left:836.8px;top:875px;" width="8.2" height="8.4" viewBox="0 0 8.2 8.4"><path d="M0.8 0 V8.4" stroke="#aaa" stroke-width="1.6"/><path d="M8.2 0 L2 4.2 L8.2 8.4 Z" fill="#888"/></svg>
<svg style="left:868.4px;top:875px;" width="6.4" height="8.4" viewBox="0 0 6.4 8.4"><path d="M6.4 0 L0 4.2 L6.4 8.4 Z" fill="#888"/></svg>
<div class="a" style="left:894px;top:866.3px;width:30px;height:29.5px;background:#4fb2b0;border-radius:2px"></div>
<svg style="left:900px;top:870px;" width="20" height="20" viewBox="0 0 20 20"><path transform="translate(-900,-870)" d="M906.9 878.6 L909.6 876.3 V886" fill="none" stroke="#333" stroke-width="1.35"/></svg>
<svg style="left:944px;top:875px;" width="6.6" height="8.4" viewBox="0 0 6.6 8.4"><path d="M0 0 L6.6 4.2 L0 8.4 Z" fill="#888"/></svg>
<svg style="left:973px;top:875px;" width="8.6" height="8.4" viewBox="0 0 8.6 8.4"><path d="M0 0 L6.2 4.2 L0 8.4 Z" fill="#888"/><path d="M7.8 0 V8.4" stroke="#aaa" stroke-width="1.6"/></svg>
<div class="t" id="t69" style="left:1025.4px;top:874.01px;font-size:14px;color:#444;letter-spacing:-0.080px;">1 - 4 of 4 items<i class="b"></i></div>
<div class="a" style="left:1767px;top:842px;width:77px;height:37px;background:#e1343b;border-radius:18px 3px 18px 18px"></div>
<svg style="left:1775.8px;top:852.5px;" width="16" height="16" viewBox="0 0 16 16"><circle cx="8" cy="8" r="7.2" fill="none" stroke="#fff" stroke-width="1.2"/><path d="M5.8 6.3 Q5.8 3.9 8 3.9 Q10.2 3.9 10.2 6 Q10.2 7.3 8.8 8 Q8 8.5 8 9.8" fill="none" stroke="#fff" stroke-width="1.6"/><circle cx="8" cy="11.7" r="1" fill="#fff"/></svg>
<div class="t" id="t70" style="left:1799px;top:854.01px;font-size:13.5px;color:#fff;font-weight:700;letter-spacing:-0.227px;">Help<i class="b"></i></div>
</body></html>
